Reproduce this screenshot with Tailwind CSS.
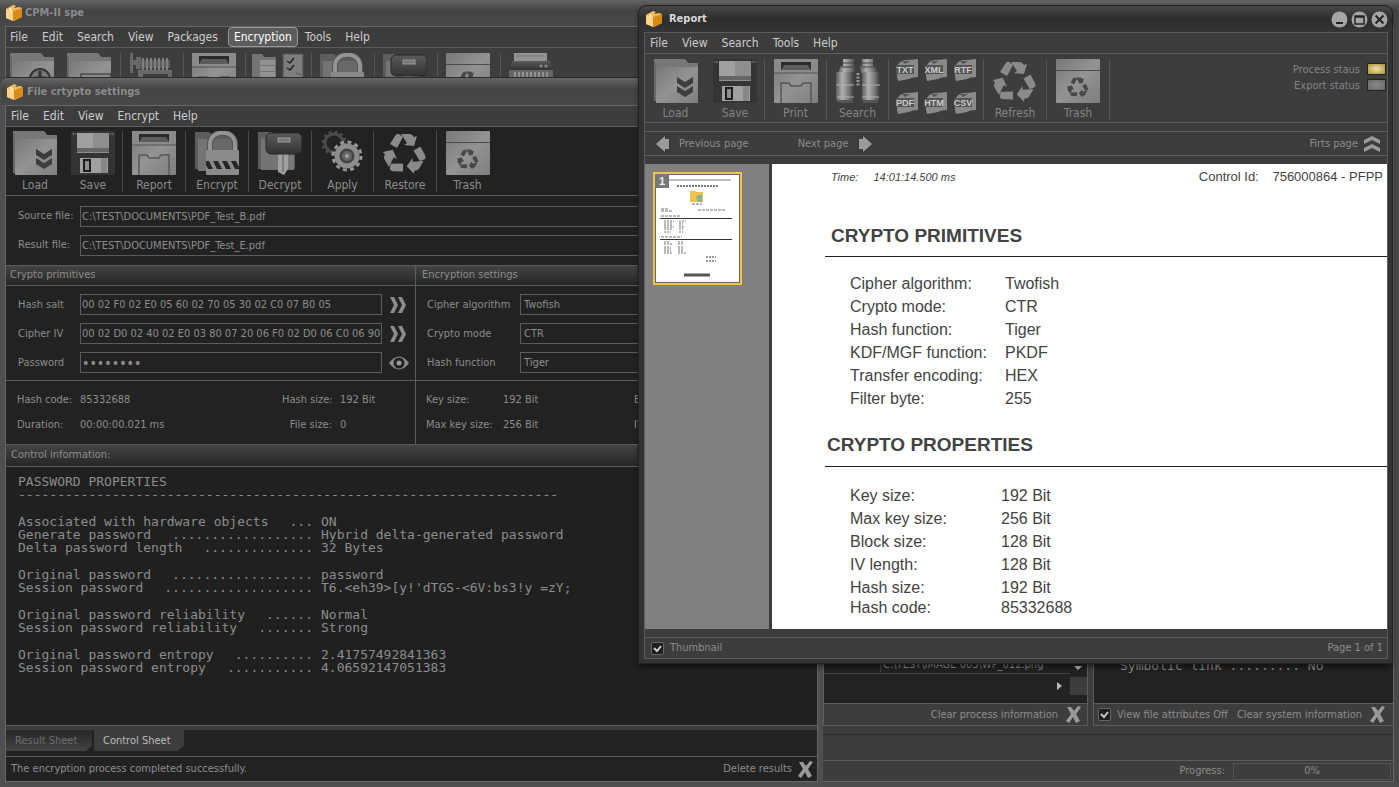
<!DOCTYPE html>
<html lang="en">
<head>
  <meta charset="UTF-8" />
  <meta name="viewport" content="width=device-width, initial-scale=1.0" />
  <title>CPM-II spe</title>
  <script src="https://cdn.jsdelivr.net/npm/@tailwindcss/browser@4"></script>
</head>
<body class="relative h-screen overflow-hidden bg-[#484848] font-['DejaVu_Sans_Condensed','DejaVu_Sans',sans-serif] text-[11px] leading-[14px] text-[#8c8c8c]">

  <!-- Icon sprite -->
  <svg class="absolute size-0" xmlns="http://www.w3.org/2000/svg">
    <defs>
      <linearGradient id="metal" x1="0" y1="0" x2="1" y2="1">
        <stop offset="0" stop-color="#787878" /><stop offset=".5" stop-color="#939393" /><stop offset="1" stop-color="#7e7e7e" />
      </linearGradient>
      <linearGradient id="tube" x1="0" y1="0" x2="1" y2="0">
        <stop offset="0" stop-color="#5c5c5c" /><stop offset=".35" stop-color="#b0b0b0" /><stop offset=".7" stop-color="#7a7a7a" /><stop offset="1" stop-color="#3a3a3a" />
      </linearGradient>
      <linearGradient id="dark" x1="0" y1="0" x2="0" y2="1">
        <stop offset="0" stop-color="#5a5a5a" /><stop offset="1" stop-color="#333" />
      </linearGradient>
      <pattern id="hazard" width="9" height="8" patternUnits="userSpaceOnUse" patternTransform="translate(0 6)">
        <rect width="9" height="8" fill="#8a8a8a" /><path d="M0 0h5l4 8H4Z" fill="#262626" />
      </pattern>
    </defs>

    <symbol id="cube" viewBox="0 0 16 16">
      <path d="M0 4 8 1v3l8-1v9l-8 4-8-3Z" fill="#e9a93c" />
      <path d="M0 4l7 2v10l-7-3Z" fill="#ffd489" />
      <path d="M7 6l9-3v9l-9 4Z" fill="#d88a14" />
      <path d="M0 4 7 0l3 1-2 2 5-1 3 1-9 3Z" fill="#f3bd5b" />
      <path d="M3 3 5 3l1 4-2-1Z" fill="#fff0cf" />
    </symbol>

    <symbol id="folder" viewBox="0 0 44 44">
      <path d="M0 1h32l3 4h9v39H2V8H0Z" fill="#5e5e5e" />
      <path d="M0 0h31l3 4h10v4H0Z" fill="#777" />
      <path d="M2 8h42v36H2Z" fill="url(#metal)" />
      <path d="M0 3h2v39H0Z" fill="#696969" />
    </symbol>

    <symbol id="load" viewBox="0 0 44 44">
      <use href="#folder" width="44" height="44" />
      <path d="M23 18l8 5 8-5v6l-8 5-8-5ZM23 27l8 5 8-5v6l-8 5-8-5Z" fill="#3d3d3d" />
    </symbol>

    <symbol id="save" viewBox="0 0 44 44">
      <rect width="44" height="44" rx="2" fill="#343434" />
      <rect x="1" y="2" width="4" height="2" fill="#555" /><rect x="39" y="2" width="4" height="2" fill="#555" />
      <rect x="6" y="2" width="32" height="20" fill="#8e8e8e" /><rect x="6" y="2" width="16" height="16" fill="#a0a0a0" />
      <rect x="6" y="17" width="32" height="4" fill="#666" />
      <rect x="9" y="27" width="28" height="15" fill="#a0a0a0" /><rect x="30" y="27" width="6" height="15" fill="#888" />
      <rect x="13" y="29" width="6" height="11" fill="#909090" stroke="#1c1c1c" stroke-width="2" />
    </symbol>

    <symbol id="drawer" viewBox="0 0 44 44">
      <rect width="44" height="44" rx="1" fill="url(#metal)" />
      <path d="M0 0h44v14H0Z" fill="#8a8a8a" />
      <path d="M7 3h30v8H7Z" fill="#2b2b2b" /><path d="M10 6h24l3 5H7Z" fill="#5c5c5c" />
      <path d="M0 14h44" stroke="#555" />
      <path d="M7 44V24h8l2 3h10l2-3h8v20" fill="none" stroke="#575757" stroke-width="1.500" />
    </symbol>

    <symbol id="encrypt" viewBox="0 0 44 44">
      <path d="M0 1h14l3 3h22v34H0Z" fill="#5d5d5d" /><path d="M3 8h14v32H3Z" fill="#747474" />
      <path d="M17 8h20v12H17Z" fill="#686868" />
      <path d="M15 21V13c0-15 25-15 25 0v8" fill="none" stroke="#555" stroke-width="6" />
      <path d="M15 21V13c0-15 25-15 25 0v8" fill="none" stroke="#949494" stroke-width="4" />
      <rect x="11" y="19" width="33" height="25" rx="1" fill="#8a8a8a" />
      <rect x="11" y="30" width="33" height="8" fill="url(#hazard)" />
    </symbol>

    <symbol id="decrypt" viewBox="0 0 44 44">
      <path d="M0 1h14l3 3h20v34H0Z" fill="#5d5d5d" /><path d="M3 8h33v31H3Z" fill="#747474" />
      <path d="M20 22h10v16l-4 6-6-3Z" fill="#a0a0a0" /><path d="M30 25h5v4l-3 2 3 2v4h-5Z" fill="#7a7a7a" />
      <path d="M25 24v17" stroke="#5d5d5d" />
      <rect x="8" y="2" width="36" height="21" rx="5" fill="url(#dark)" stroke="#262626" />
      <rect x="20" y="7" width="12" height="4" fill="#777" stroke="#999" />
    </symbol>

    <symbol id="apply" viewBox="0 0 44 44">
      <circle cx="13" cy="12" r="9" fill="none" stroke="#4b4b4b" stroke-width="3" />
      <circle cx="13" cy="12" r="11" fill="none" stroke="#4b4b4b" stroke-width="3" stroke-dasharray="3 2.760" />
      <circle cx="26" cy="25" r="14" fill="none" stroke="#969696" stroke-width="3" stroke-dasharray="4 3.330" />
      <circle cx="26" cy="25" r="12.500" fill="#8d8d8d" />
      <circle cx="26" cy="25" r="7.500" fill="#444" /><circle cx="26" cy="25" r="5" fill="#666" /><circle cx="26" cy="25" r="2" fill="#a3a3a3" />
    </symbol>

    <symbol id="recycle" viewBox="0 0 44 44">
      <g id="chase">
        <path d="M7 13 12 5q2-3 4-2l4 3-6 11Z" />
        <path d="M18 3h9q2 0 4 3l3-1-3 10-10-1 3-2Z" />
      </g>
      <use href="#chase" transform="rotate(120 21.500 23)" />
      <use href="#chase" transform="rotate(240 21.500 23)" />
    </symbol>

    <symbol id="trash" viewBox="0 0 44 44">
      <rect width="44" height="44" rx="1" fill="url(#metal)" />
      <path d="M0 11.500h44" stroke="#4c4c4c" />
      <use href="#recycle" x="11" y="17" width="22" height="22" fill="#484848" />
    </symbol>

    <symbol id="binoculars" viewBox="0 0 44 44">
      <path d="M7 0h11v7h2l-1 7H2l3-7h2Z" fill="url(#tube)" /><path d="M26 0h11v7h2l3 7H25l-1-7h2Z" fill="url(#tube)" />
      <rect x="0" y="13" width="18" height="29" rx="2" fill="url(#tube)" /><rect x="26" y="13" width="18" height="29" rx="2" fill="url(#tube)" />
      <path d="M0 26h18M26 26h18M1 38h17M26 38h17" stroke="#b0b0b0" />
      <rect x="2" y="41" width="15" height="3" fill="#555" /><rect x="27" y="41" width="15" height="3" fill="#555" />
      <path d="M22 14v13" stroke="#999" stroke-width="3" stroke-dasharray="2 1.500" />
      <path d="M7 4h11M26 4h11M5 8h14M25 8h14" stroke="#444" />
    </symbol>

    <symbol id="vise" viewBox="0 0 44 25">
      <path d="M1 0h3v7h3V4h5v12H7v-4H4v8H1Z" fill="#686868" />
      <path d="M11 7h30v8H11Z" fill="#5f5f5f" /><path d="M14 5v12M18 5v12M22 5v12M26 5v12M30 5v12M34 5v12M38 5v12" stroke="#7e7e7e" stroke-width="2" />
      <path d="M9 25v-8h34v8h-4v-4H14v4Z" fill="#696969" />
    </symbol>

    <symbol id="checklist" viewBox="0 0 52 25">
      <path d="M0 1h10l2 3h12v21H0Z" fill="#747474" /><path d="M8 7h15v5H8ZM8 13h15v5H8ZM8 19h15v5H8Z" fill="#929292" />
      <rect x="31" y="1" width="20" height="24" fill="#7d7d7d" stroke="#505050" />
      <path d="M35 8l3 2 4-5M35 15l3 2 4-5" fill="none" stroke="#222" stroke-width="1.500" /><path d="M44 20l5 2" stroke="#555" />
    </symbol>

    <symbol id="shredder" viewBox="0 0 44 25">
      <path d="M5 0h33v8H5Z" fill="#939393" /><path d="M7 3h29" stroke="#777" />
      <path d="M3 8h38l3 9H0Z" fill="url(#dark)" /><circle cx="32" cy="13" r="1.500" fill="#888" /><circle cx="37" cy="13" r="1.500" fill="#888" />
      <path d="M0 17h44v8H0Z" fill="#666" /><path d="M6 19v6M10 19v6M14 19v6M18 19v6M22 19v6M26 19v6M30 19v6M34 19v6M38 19v6" stroke="#8e8e8e" stroke-width="2" />
    </symbol>

    <symbol id="sheet" viewBox="0 0 22 22">
      <path d="M1 8Q3 2 9 1q6 0 13-1v18q-6 0-9 2-5 1-11 2L1 18Z" fill="#8a8a8a" />
      <path d="M6 2l8 0-5 3Z" fill="#555" />
      <rect x="0" y="6" width="18" height="9" fill="#555" />
    </symbol>

    <symbol id="cross" viewBox="0 0 15 17">
      <path d="M1 1h4l3 4 4-5 3 1-5 7 4 7-4 2-3-6-4 6-3-2 5-7Z" fill="#9a9a9a" />
    </symbol>

    <symbol id="chevrons" viewBox="0 0 16 16">
      <path d="M0 0h4l4 8-4 8H0l4-8ZM8 0h4l4 8-4 8H8l4-8Z" />
    </symbol>

    <symbol id="arrow" viewBox="0 0 13 16">
      <path d="M0 8 9 0v3h4v10H9v3Z" />
    </symbol>
  </svg>

  <!-- Main window -->
  <main class="flex h-full flex-col border-b-[5px] border-[#4c4c4c]">
    <header class="flex h-[26px] items-center gap-[3px] bg-linear-to-b from-[#656565] via-[#444] via-40% to-[#484848] pl-[6px]">
      <svg class="size-4"><use href="#cube" /></svg>
      <h1 class="text-[11px] font-bold">CPM-II spe</h1>
    </header>
    <div class="mx-[5px] flex flex-1 flex-col border border-[#666] bg-[#3d3d3d]">
      <nav class="flex h-[20px] items-center text-[12px] text-[#ccc]">
        <button class="px-[7px] pl-1">File</button>
        <button class="px-[7px]">Edit</button>
        <button class="px-[7px]">Search</button>
        <button class="px-[7px]">View</button>
        <button class="px-[7px]">Packages</button>
        <button class="ml-[3px] h-5 rounded-sm border border-[#999] bg-[#5c5c5c] px-[5px] text-white">Encryption</button>
        <button class="px-[7px]">Tools</button>
        <button class="px-[7px]">Help</button>
      </nav>
      <div class="flex border-t border-[#5c5c5c] pt-[5px]">
        <button aria-label="Add files" class="flex h-[44px] w-[57px] pl-1"><svg class="size-[44px]"><use href="#folder" /><circle cx="30" cy="26" r="10" fill="#777" stroke="#333" stroke-width="2" /><path d="M30 18v12M24 25h12" stroke="#333" stroke-width="3" /></svg></button>
        <button aria-label="Open folder" class="flex h-[44px] w-[57px] pl-1"><svg class="size-[44px]"><use href="#folder" /><rect x="14" y="21" width="30" height="20" fill="#8a8a8a" stroke="#2a2a2a" /></svg></button>
        <button aria-label="Compress" class="flex h-[44px] w-[63px] border-l border-[#555] pl-2"><svg class="h-[25px] w-[44px]"><use href="#vise" /></svg></button>
        <button aria-label="Report" class="flex h-[44px] w-[62px] border-l border-[#555] pl-2"><svg class="size-[44px]"><use href="#drawer" /></svg></button>
        <button aria-label="Check list" class="flex h-[44px] w-[66px] border-l border-[#555] pl-[6px]"><svg class="h-[25px] w-[52px]"><use href="#checklist" /></svg></button>
        <button aria-label="Encrypt" class="flex h-[44px] w-[63px] border-l border-[#555] pl-2"><svg class="size-[44px]"><use href="#encrypt" /></svg></button>
        <button aria-label="Decrypt" class="flex h-[44px] w-[63px] border-l border-[#555] pl-2"><svg class="size-[44px]"><use href="#decrypt" /></svg></button>
        <button aria-label="Trash" class="flex h-[44px] w-[63px] border-l border-[#555] pl-2"><svg class="size-[44px]"><use href="#trash" /></svg></button>
        <button aria-label="Shred" class="flex h-[44px] w-[63px] border-l border-[#555] pl-2"><svg class="h-[25px] w-[44px]"><use href="#shredder" /></svg></button>
      </div>

      <div class="mt-auto ml-[817px] grid grid-cols-[265px_1fr] gap-[5px]">
        <section class="border border-[#5c5c5c]">
          <div class="relative h-[46px] bg-[#222]">
            <div class="mr-[17px] flex h-[17px] items-center border-b border-[#444] pl-[56px]"><span class="border-l border-[#444] pl-[2px]">C:\TEST\IMAGE 003\WP_012.png</span></div>
            <svg class="absolute right-0 top-0 h-[38px] w-[30px]"><path d="M17 9h8l-4 4ZM0 25l5 4-5 4Z" fill="#bbb" /><rect x="13" y="20" width="17" height="18" fill="#3d3d3d" /></svg>
          </div>
          <button class="flex h-[22px] w-full items-center justify-end gap-2 border-t border-[#5c5c5c] pr-[6px]">Clear process information<svg class="h-[17px] w-[15px]"><use href="#cross" /></svg></button>
        </section>
        <section class="border border-r-0 border-[#5c5c5c]">
          <pre class="h-[46px] bg-[#222] pl-[26px] pt-[2px] font-['DejaVu_Sans_Mono',monospace] text-[13px]">Symbolic link ......... No</pre>
          <div class="flex h-[22px] items-center border-t border-[#5c5c5c] pl-1">
            <label class="flex items-center gap-[6px]"><input type="checkbox" checked class="size-[13px] appearance-none rounded-xs border border-[#666] bg-[#1e1e1e]" /><svg class="-ml-[19px] size-[13px] fill-none stroke-[#ccc] stroke-2"><path d="M3 6l3 3 4-5" /></svg>View file attributes Off</label>
            <button class="ml-auto flex items-center gap-2 pr-2">Clear system information<svg class="h-[17px] w-[15px]"><use href="#cross" /></svg></button>
          </div>
        </section>
      </div>
      <div class="mt-[8px] h-[26px] border-t border-[#2a2a2a]"></div>
      <footer class="flex h-[21px] items-center justify-end gap-2 border-t border-[#5c5c5c] pr-[2px]">
        <span id="progress-label">Progress:</span>
        <div role="progressbar" aria-labelledby="progress-label" aria-valuenow="0" class="h-[17px] w-[158px] border border-[#555] text-center">0%</div>
      </footer>
    </div>
  </main>

  <!-- Crypto settings window -->
  <section class="absolute bottom-0 left-0 top-[77px] flex w-[823px] flex-col rounded-t-md border-b-[5px] border-l border-[#4f4f4f] bg-[#4f4f4f]">
    <header class="flex h-[28px] items-center gap-1 rounded-t-md border-t border-[#2c2c2c] bg-linear-to-b from-[#656565] via-[#444] via-40% to-[#484848] pl-[6px]">
      <svg class="size-4"><use href="#cube" /></svg>
      <h2 class="text-[11px] font-bold">File crtypto settings</h2>
    </header>
    <div class="ml-1 mr-[5px] flex flex-1 flex-col border border-[#666] bg-[#222]">
      <nav class="flex h-[20px] items-center bg-[#3d3d3d] text-[12px] text-[#ccc]">
        <button class="px-[7px] pl-[5px]">File</button>
        <button class="px-[7px]">Edit</button>
        <button class="px-[7px]">View</button>
        <button class="px-[7px]">Encrypt</button>
        <button class="px-[7px]">Help</button>
      </nav>
      <div class="flex h-[70px] border-y border-[#5c5c5c] pt-1 text-[12px]">
        <button class="flex h-[61px] w-[58px] flex-col items-center gap-[3px]"><svg class="size-[44px]"><use href="#load" /></svg>Load</button>
        <button class="flex h-[61px] w-[58px] flex-col items-center gap-[3px]"><svg class="size-[44px]"><use href="#save" /></svg>Save</button>
        <button class="flex h-[61px] w-[63px] flex-col items-center gap-[3px] border-l border-[#4a4a4a]"><svg class="size-[44px]"><use href="#drawer" /></svg>Report</button>
        <button class="flex h-[61px] w-[63px] flex-col items-center gap-[3px] border-l border-[#4a4a4a]"><svg class="size-[44px]"><use href="#encrypt" /></svg>Encrypt</button>
        <button class="flex h-[61px] w-[63px] flex-col items-center gap-[3px] border-l border-[#4a4a4a]"><svg class="size-[44px]"><use href="#decrypt" /></svg>Decrypt</button>
        <button class="flex h-[61px] w-[62px] flex-col items-center gap-[3px] border-l border-[#4a4a4a]"><svg class="size-[44px]"><use href="#apply" /></svg>Apply</button>
        <button class="flex h-[61px] w-[63px] flex-col items-center gap-[3px] border-l border-[#4a4a4a]"><svg class="size-[44px] fill-[#8a8a8a]"><use href="#recycle" /></svg>Restore</button>
        <button class="flex h-[61px] w-[62px] flex-col items-center gap-[3px] border-l border-[#4a4a4a]"><svg class="size-[44px]"><use href="#trash" /></svg>Trash</button>
      </div>

      <div class="grid grid-cols-[62px_1fr] gap-y-2 pb-[9px] pl-3 pt-[10px]">
        <label for="source" class="pt-[3px]">Source file:</label>
        <input id="source" class="h-[21px] border border-[#5c5c5c] px-px" value="C:\TEST\DOCUMENTS\PDF_Test_B.pdf" />
        <label for="result" class="pt-[3px]">Result file:</label>
        <input id="result" class="h-[21px] border border-[#5c5c5c] px-px" value="C:\TEST\DOCUMENTS\PDF_Test_E.pdf" />
      </div>

      <div class="grid grid-cols-[410px_1fr]">
        <section class="border-r border-[#5c5c5c]">
          <h3 class="h-[21px] border-y border-[#5c5c5c] bg-linear-to-b from-[#444] to-[#262626] pl-1 leading-[17px]">Crypto primitives</h3>
          <div class="grid grid-cols-[62px_302px_1fr] items-center gap-y-2 pb-[7px] pl-3 pt-2">
            <label for="salt">Hash salt</label>
            <input id="salt" class="h-[21px] border border-[#5c5c5c] px-px" value="00 02 F0 02 E0 05 60 02 70 05 30 02 C0 07 B0 05" />
            <button aria-label="Next salt" class="pl-2"><svg class="size-4 fill-[#8c8c8c]"><use href="#chevrons" /></svg></button>
            <label for="iv">Cipher IV</label>
            <input id="iv" class="h-[21px] border border-[#5c5c5c] px-px" value="00 02 D0 02 40 02 E0 03 80 07 20 06 F0 02 D0 06 C0 06 90 06" />
            <button aria-label="Next IV" class="pl-2"><svg class="size-4 fill-[#8c8c8c]"><use href="#chevrons" /></svg></button>
            <label for="password">Password</label>
            <input id="password" type="password" class="h-[21px] border border-[#5c5c5c] px-px text-[14px]" value="password" />
            <button aria-label="Show password" class="pl-[7px]"><svg class="h-4 w-5" viewBox="0 0 20 16"><path d="M0 8Q10-5 20 8 10 21 0 8Z" fill="#8c8c8c" /><circle cx="10" cy="8" r="5.500" fill="#222" /><circle cx="10" cy="8" r="2.500" fill="#9a9a9a" /></svg></button>
          </div>
          <div class="grid h-[64px] grid-cols-[63px_1fr_58px_75px] items-center border-t border-[#5c5c5c] py-[6px] pl-[11px]">
            <span>Hash code:</span><span>85332688</span><span class="pr-2 text-right whitespace-nowrap">Hash size:</span><span>192 Bit</span>
            <span>Duration:</span><span>00:00:00.021 ms</span><span class="pr-2 text-right whitespace-nowrap">File size:</span><span>0</span>
          </div>
        </section>
        <section>
          <h3 class="h-[21px] border-y border-[#5c5c5c] bg-linear-to-b from-[#444] to-[#262626] pl-[6px] leading-[17px]">Encryption settings</h3>
          <div class="grid grid-cols-[93px_1fr] items-center gap-y-2 pb-[7px] pl-[11px] pt-2">
            <label for="cipher">Cipher algorithm</label>
            <select id="cipher" class="h-[21px] appearance-none border border-[#5c5c5c] pl-[3px]"><option>Twofish</option></select>
            <label for="mode">Crypto mode</label>
            <select id="mode" class="h-[21px] appearance-none border border-[#5c5c5c] pl-[3px]"><option>CTR</option></select>
            <label for="hash">Hash function</label>
            <select id="hash" class="h-[21px] appearance-none border border-[#5c5c5c] pl-[3px]"><option>Tiger</option></select>
          </div>
          <div class="grid h-[64px] grid-cols-[77px_131px_1fr] items-center border-t border-[#5c5c5c] py-[6px] pl-[10px]">
            <span>Key size:</span><span>192 Bit</span><span>Block size:</span>
            <span>Max key size:</span><span>256 Bit</span><span>IV length:</span>
          </div>
        </section>
      </div>

      <h3 class="h-[23px] border-y border-[#5c5c5c] bg-linear-to-b from-[#444] to-[#262626] pl-[5px] leading-[19px]">Control information:</h3>
      <div class="flex flex-1 flex-col gap-[14px] bg-[#202020] pl-3 pt-2 font-['DejaVu_Sans_Mono',monospace] text-[13px] leading-[13px]">
        <div>
          <p>PASSWORD PROPERTIES</p>
          <p>---------------------------------------------------------------------</p>
        </div>
        <div>
          <p class="flex gap-2"><span class="flex w-[295px] justify-between"><span>Associated with hardware objects</span><span>...</span></span>ON</p>
          <p class="flex gap-2"><span class="flex w-[295px] justify-between"><span>Generate password</span><span>..................</span></span>Hybrid delta-generated password</p>
          <p class="flex gap-2"><span class="flex w-[295px] justify-between"><span>Delta password length</span><span>..............</span></span>32 Bytes</p>
        </div>
        <div>
          <p class="flex gap-2"><span class="flex w-[295px] justify-between"><span>Original password</span><span>..................</span></span>password</p>
          <p class="flex gap-2"><span class="flex w-[295px] justify-between"><span>Session password</span><span>...................</span></span>T6.&lt;eh39&gt;[y!'dTGS-&lt;6V:bs3!y =zY;</p>
        </div>
        <div>
          <p class="flex gap-2"><span class="flex w-[295px] justify-between"><span>Original password reliability</span><span>......</span></span>Normal</p>
          <p class="flex gap-2"><span class="flex w-[295px] justify-between"><span>Session password reliability</span><span>.......</span></span>Strong</p>
        </div>
        <div>
          <p class="flex gap-2"><span class="flex w-[295px] justify-between"><span>Original password entropy</span><span>..........</span></span>2.41757492841363</p>
          <p class="flex gap-2"><span class="flex w-[295px] justify-between"><span>Session password entropy</span><span>...........</span></span>4.06592147051383</p>
        </div>
      </div>
      <div class="h-[5px] border-t border-[#5c5c5c] bg-[#3d3d3d]"></div>
      <div class="flex h-[26px] items-start gap-[2px]">
        <button class="h-[21px] w-[86px] bg-linear-to-b from-[#262626] to-[#444] pl-[9px] text-left text-[#6f6f6f] [clip-path:polygon(0_0,100%_0,100%_75%,93%_100%,0_100%)]">Result Sheet</button>
        <button class="h-[21px] w-[90px] bg-[#3d3d3d] pl-[9px] text-left text-[#bbb] [clip-path:polygon(0_0,100%_0,100%_75%,93%_100%,0_100%)]">Control Sheet</button>
      </div>
      <footer class="flex h-[25px] items-center border-t border-[#5c5c5c] pl-[5px]">
        <span>The encryption process completed successfully.</span>
        <button class="ml-auto flex items-center gap-[6px] pr-1">Delete results<svg class="h-[17px] w-[15px]"><use href="#cross" /></svg></button>
      </footer>
    </div>
  </section>

  <!-- Report window -->
  <section class="absolute bottom-[123px] left-[638px] right-[6px] top-[5px] flex flex-col rounded-t-lg border border-[#222] bg-[#323232] pb-1 pl-[5px] pr-1 shadow-md shadow-black/40">
    <header class="-ml-[5px] -mr-1 flex h-[26px] items-center gap-[7px] rounded-t-lg bg-linear-to-b from-[#484848] via-[#2e2e2e] via-50% to-[#343434] pl-[7px] pr-1">
      <svg class="size-4"><use href="#cube" /></svg>
      <h2 class="text-[11px] font-bold text-[#d8d8d8]">Report</h2>
      <div class="ml-auto flex gap-[3px]">
        <button aria-label="Minimize"><svg class="size-[17px] fill-none stroke-[#222] stroke-2"><circle cx="8.500" cy="8.500" r="8" fill="#a5a5a5" stroke="none" /><path d="M5 12h7" /></svg></button>
        <button aria-label="Maximize"><svg class="size-[17px] fill-none stroke-[#222]"><circle cx="8.500" cy="8.500" r="8" fill="#a5a5a5" stroke="none" /><path d="M4 5h9v8H4ZM4 6h9" stroke-width="1.500" /></svg></button>
        <button aria-label="Close"><svg class="size-[17px] fill-none stroke-[#222] stroke-2"><circle cx="8.500" cy="8.500" r="8" fill="#a5a5a5" stroke="none" /><path d="M4.500 4.500l8 8M12.500 4.500l-8 8" /></svg></button>
      </div>
    </header>
    <div class="flex min-h-0 flex-1 flex-col border border-[#5c5c5c] bg-[#3d3d3d]">
      <nav class="flex h-[20px] items-center text-[12px] text-[#ccc]">
        <button class="px-[7px] pl-[5px]">File</button>
        <button class="px-[7px]">View</button>
        <button class="px-[7px]">Search</button>
        <button class="px-[7px]">Tools</button>
        <button class="px-[7px]">Help</button>
      </nav>
      <div class="flex h-[70px] border-y border-[#5c5c5c] pt-[5px] text-[12px] text-[#848484]">
        <button class="flex h-[61px] w-[61px] flex-col items-center gap-[3px]"><svg class="size-[44px]"><use href="#load" /></svg>Load</button>
        <button class="flex h-[61px] w-[58px] flex-col items-center gap-[3px]"><svg class="size-[44px]"><use href="#save" /></svg>Save</button>
        <button class="flex h-[61px] w-[62px] flex-col items-center gap-[3px] border-l border-[#555]"><svg class="size-[44px]"><use href="#drawer" /></svg>Print</button>
        <button class="flex h-[61px] w-[62px] flex-col items-center gap-[3px] border-l border-[#555]"><svg class="size-[44px]"><use href="#binoculars" /></svg>Search</button>
        <div class="grid h-[61px] w-[96px] grid-cols-3 content-start gap-y-[11px] border-x border-[#555] pl-[7px] font-['Liberation_Sans',sans-serif] text-[9px] font-bold leading-[22px] text-[#ccc]">
          <button class="relative h-[22px] w-[22px]"><svg class="absolute inset-0 size-[22px]"><use href="#sheet" /></svg><span class="relative -ml-1">TXT</span></button>
          <button class="relative h-[22px] w-[22px]"><svg class="absolute inset-0 size-[22px]"><use href="#sheet" /></svg><span class="relative -ml-1">XML</span></button>
          <button class="relative h-[22px] w-[22px]"><svg class="absolute inset-0 size-[22px]"><use href="#sheet" /></svg><span class="relative -ml-1">RTF</span></button>
          <button class="relative h-[22px] w-[22px]"><svg class="absolute inset-0 size-[22px]"><use href="#sheet" /></svg><span class="relative -ml-1">PDF</span></button>
          <button class="relative h-[22px] w-[22px]"><svg class="absolute inset-0 size-[22px]"><use href="#sheet" /></svg><span class="relative -ml-1">HTM</span></button>
          <button class="relative h-[22px] w-[22px]"><svg class="absolute inset-0 size-[22px]"><use href="#sheet" /></svg><span class="relative -ml-1">CSV</span></button>
        </div>
        <button class="flex h-[61px] w-[62px] flex-col items-center gap-[3px]"><svg class="size-[44px] fill-[#8a8a8a]"><use href="#recycle" /></svg>Refresh</button>
        <button class="flex h-[61px] w-[64px] flex-col items-center gap-[3px] border-x border-[#555]"><svg class="size-[44px]"><use href="#trash" /></svg>Trash</button>
        <dl class="ml-auto grid grid-cols-[auto_19px] content-start gap-x-[7px] gap-y-[2px] pr-px pt-1 text-right text-[11px]">
          <dt>Process staus</dt><dd class="h-3 border border-[#222] bg-radial from-[#ece3b0] to-[#b08f28]"></dd>
          <dt>Export status</dt><dd class="h-3 border border-[#222] bg-radial from-[#8a8a8a] to-[#666]"></dd>
        </dl>
      </div>
      <div class="mt-2 flex h-[25px] items-center border-y border-[#5c5c5c] pl-[11px] pr-[7px]">
        <button class="flex items-center gap-[10px]"><svg class="h-4 w-[13px] fill-[#9a9a9a]"><use href="#arrow" /></svg>Previous page</button>
        <button class="ml-[49px] flex items-center gap-[10px]">Next page<svg class="h-4 w-[13px] rotate-180 fill-[#9a9a9a]"><use href="#arrow" /></svg></button>
        <button class="ml-auto flex items-center gap-[6px]">Firts page<svg class="size-4 -rotate-90 fill-[#9a9a9a]"><use href="#chevrons" /></svg></button>
      </div>
      <div class="my-2 flex min-h-0 flex-1">
        <aside class="w-[124px] bg-[#808080] p-2">
          <button aria-label="Page 1" class="relative block h-[113px] w-[89px] border-2 border-[#f2c544] bg-white outline-1 -outline-offset-3 outline-[#666]">
            <svg viewBox="0 0 85 109" class="h-full w-full fill-none stroke-[#777]">
              <path d="M14 6h62" /><path d="M22 12h41" stroke-dasharray="2 1" stroke-width="2" />
              <path d="M35 17h5l1 1h7v10H35Z" fill="#f0c24e" stroke="none" /><path d="M41 22l6-2v8h-5Z" fill="#8fb58a" stroke="none" />
              <path d="M37 30h10M6 35h7M6 37h12M43 36h28M6 42h19M6 63h21" stroke-dasharray="3 1" />
              <path d="M5 44.500h72M5 65.500h72" stroke="#333" />
              <path d="M9 47h10M24 47h7M9 49h8M24 49h4M9 51h9M24 51h4M9 53h10M24 53h5M9 55h9M24 55h4M9 58h7M24 58h4M9 68h6M23 68h5M9 70h9M23 70h5M9 73h7M23 73h5M9 75h7M23 75h5M9 77h7M23 77h5M9 79h8M23 79h8" stroke-dasharray="2 1" />
              <path d="M51 83h10M51 87h10" stroke-dasharray="2 1" stroke="#333" /><path d="M29 101h26" stroke="#555" stroke-width="3" />
            </svg>
            <span class="absolute left-0 top-0 h-[14px] w-[14px] bg-[#777] font-['Liberation_Sans',sans-serif] text-[11px] font-bold text-[#eee]">1</span>
          </button>
        </aside>
        <article class="ml-[3px] flex-1 overflow-hidden bg-white pl-[53px] font-['Liberation_Sans',sans-serif] text-[16px] leading-[23px] text-[#444]">
          <div class="flex h-[26px] justify-between pl-[6px] pr-1 text-[11px] leading-[26px] whitespace-nowrap">
            <p class="italic">Time: <span class="ml-3">14:01:14.500 ms</span></p>
            <p class="text-[13px]">Control Id: <span class="ml-[10px]">756000864 - PFPP</span></p>
          </div>
          <h3 class="mt-[34px] border-b-[1px] border-[#222] pb-2 pl-[6px] text-[19px] font-bold leading-[24px]">CRYPTO PRIMITIVES</h3>
          <dl class="mt-[15px] grid grid-cols-[155px_1fr] pl-[25px]">
            <dt>Cipher algorithm:</dt><dd>Twofish</dd>
            <dt>Crypto mode:</dt><dd>CTR</dd>
            <dt>Hash function:</dt><dd>Tiger</dd>
            <dt>KDF/MGF function:</dt><dd>PKDF</dd>
            <dt>Transfer encoding:</dt><dd>HEX</dd>
            <dt>Filter byte:</dt><dd>255</dd>
          </dl>
          <h3 class="mt-[23px] border-b-[1px] border-[#222] pb-[9px] pl-[2px] text-[19px] font-bold leading-[24px]">CRYPTO PROPERTIES</h3>
          <dl class="mt-[17px] grid grid-cols-[151px_1fr] pl-[25px]">
            <dt>Key size:</dt><dd>192 Bit</dd>
            <dt>Max key size:</dt><dd>256 Bit</dd>
            <dt>Block size:</dt><dd>128 Bit</dd>
            <dt>IV length:</dt><dd>128 Bit</dd>
            <dt>Hash size:</dt><dd>192 Bit</dd>
            <dt class="leading-[18px]">Hash code:</dt><dd class="leading-[18px]">85332688</dd>
          </dl>
        </article>
      </div>
      <footer class="flex h-[21px] items-center justify-between border-t border-[#5c5c5c] pl-[6px] pr-1">
        <label class="flex items-center gap-[6px]"><input type="checkbox" checked class="size-[13px] appearance-none rounded-xs border border-[#666] bg-[#1e1e1e]" /><svg class="-ml-[19px] size-[13px] fill-none stroke-[#ccc] stroke-2"><path d="M3 6l3 3 4-5" /></svg>Thumbnail</label>
        <span>Page 1 of 1</span>
      </footer>
    </div>
  </section>

</body>
</html>
